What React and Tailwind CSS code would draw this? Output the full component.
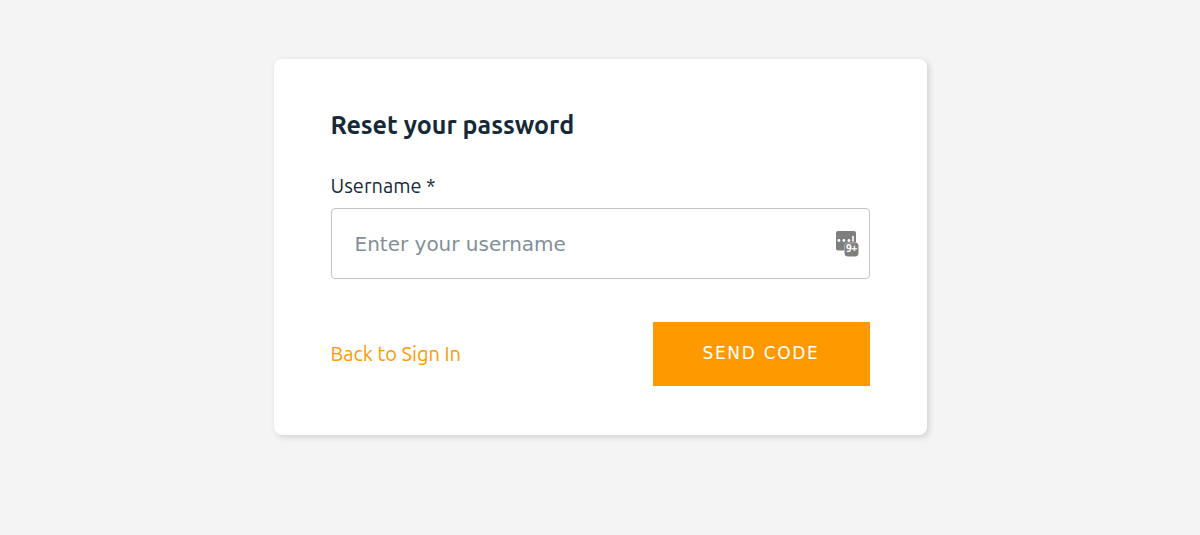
import { useState } from 'react';

function PasswordManagerIcon() {
  return (
    <svg viewBox="0 0 24 27" className="w-6 h-[27px]" aria-hidden="true">
      <rect x="1" y="1" width="20" height="19.5" rx="2" fill="#7f7f7f" />
      <rect x="9.5" y="12.5" width="14" height="14" rx="3.5" fill="#7f7f7f" />
      <circle cx="3.9" cy="10.5" r="1.4" fill="#fff" />
      <circle cx="8.9" cy="10.5" r="1.4" fill="#fff" />
      <circle cx="13.9" cy="10.5" r="1.4" fill="#fff" />
      <rect x="17.2" y="5.8" width="1.6" height="6" rx="0.7" fill="#fff" />
      <path d="M21 12.8h-8.5a3 3 0 0 0-3 3v5" fill="none" stroke="#fff" strokeOpacity="0.35" />
      <text
        x="16.6"
        y="22"
        textAnchor="middle"
        fontSize="10"
        fontWeight="700"
        fill="#fff"
        className="font-['Open_Sans',sans-serif]"
      >
        9+
      </text>
    </svg>
  );
}

export default function App() {
  const [username, setUsername] = useState('');

  const handleSubmit = (e) => {
    e.preventDefault();
  };

  return (
    <main className="min-h-screen bg-[#f4f4f4] px-4 py-[59px] font-[Ubuntu,'Noto_Sans',sans-serif] text-[#152939]">
      <form
        onSubmit={handleSubmit}
        className="mx-auto w-full max-w-[653px] rounded-lg bg-white px-[57px] pt-12 pb-[49px] shadow-[2px_2px_6px_0_rgba(0,0,0,0.15)]"
      >
        <h1 className="text-[25px] leading-9 font-semibold">Reset your password</h1>
        <div className="mt-[29px]">
          <label htmlFor="username" className="block text-[20px] leading-7">
            Username *
          </label>
          <div className="mt-2 flex h-[71px] items-center rounded border border-[#c4c4c4] pr-2.5">
            <input
              id="username"
              type="text"
              value={username}
              onChange={(e) => setUsername(e.target.value)}
              placeholder="Enter your username"
              className="h-full min-w-0 flex-1 bg-transparent px-[23px] font-['DejaVu_Sans',sans-serif] text-[20px] outline-none placeholder:text-[#828f98]"
            />
            <PasswordManagerIcon />
          </div>
        </div>
        <div className="mt-[43px] flex items-center justify-between">
          <a href="#signin" className="text-[20px] leading-7 text-[#ff9900]">
            Back to Sign In
          </a>
          <button
            type="submit"
            className="h-16 w-[217px] bg-[#ff9900] font-['DejaVu_Sans',sans-serif] text-[17px] tracking-widest text-white uppercase"
          >
            Send Code
          </button>
        </div>
      </form>
    </main>
  );
}
